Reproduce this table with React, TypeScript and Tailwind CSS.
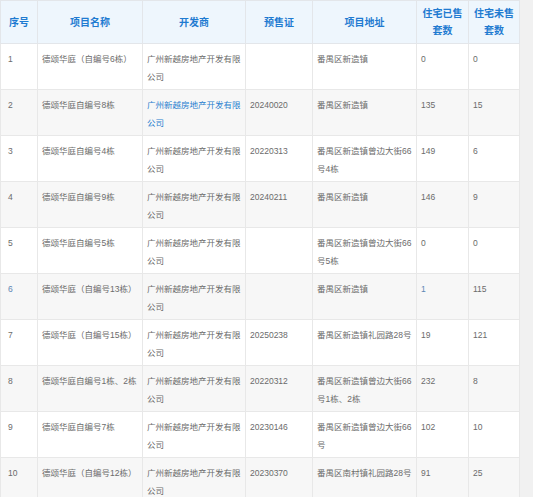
import React from 'react';

interface Row {
  no: number;
  name: string;
  dev: string;
  cert: string;
  addr: string;
  sold: number;
  unsold: number;
  devLink?: boolean;
  hl?: boolean;
}

const DEV = '广州新越房地产开发有限公司';

const rows: Row[] = [
  { no: 1, name: '德颂华庭（自编号6栋）', dev: DEV, cert: '', addr: '番禺区新造镇', sold: 0, unsold: 0 },
  { no: 2, name: '德颂华庭自编号8栋', dev: DEV, cert: '20240020', addr: '番禺区新造镇', sold: 135, unsold: 15, devLink: true },
  { no: 3, name: '德颂华庭自编号4栋', dev: DEV, cert: '20220313', addr: '番禺区新造镇曾边大街66号4栋', sold: 149, unsold: 6 },
  { no: 4, name: '德颂华庭自编号9栋', dev: DEV, cert: '20240211', addr: '番禺区新造镇', sold: 146, unsold: 9 },
  { no: 5, name: '德颂华庭自编号5栋', dev: DEV, cert: '', addr: '番禺区新造镇曾边大街66号5栋', sold: 0, unsold: 0 },
  { no: 6, name: '德颂华庭（自编号13栋）', dev: DEV, cert: '', addr: '番禺区新造镇', sold: 1, unsold: 115, hl: true },
  { no: 7, name: '德颂华庭（自编号15栋）', dev: DEV, cert: '20250238', addr: '番禺区新造镇礼园路28号', sold: 19, unsold: 121 },
  { no: 8, name: '德颂华庭自编号1栋、2栋', dev: DEV, cert: '20220312', addr: '番禺区新造镇曾边大街66号1栋、2栋', sold: 232, unsold: 8 },
  { no: 9, name: '德颂华庭自编号7栋', dev: DEV, cert: '20230146', addr: '番禺区新造镇曾边大街66号', sold: 102, unsold: 10 },
  { no: 10, name: '德颂华庭（自编号12栋）', dev: DEV, cert: '20230370', addr: '番禺区南村镇礼园路28号', sold: 91, unsold: 25 },
];

const th = 'border border-[#e3e6ea] px-1 text-center align-middle font-bold text-[10px] leading-[17px] text-[#1f7bd1]';
const td = 'border border-[#e8e8e8] px-1 pt-[6px] align-top text-[8.5px] leading-[18px]';
const gray = 'text-[#6b6b6b]';
const blue = 'text-[#2a7fcf]';
const muted = 'text-[#5d86b3]';

export default function App() {
  return (
    <div className="flex w-[533px] bg-white" style={{ fontFamily: '"Liberation Sans", "Noto Sans CJK SC", sans-serif' }}>
      <table className="w-[519px] table-fixed border-collapse">
        <colgroup>
          <col className="w-[37px]" />
          <col className="w-[105px]" />
          <col className="w-[103px]" />
          <col className="w-[67px]" />
          <col className="w-[104px]" />
          <col className="w-[52px]" />
          <col className="w-[51px]" />
        </colgroup>
        <thead>
          <tr className="h-[43px] bg-[#eef6fd]">
            <th className={th}>序号</th>
            <th className={th}>项目名称</th>
            <th className={th}>开发商</th>
            <th className={th}>预售证</th>
            <th className={th}>项目地址</th>
            <th className={th}>住宅已售套数</th>
            <th className={th}>住宅未售套数</th>
          </tr>
        </thead>
        <tbody>
          {rows.map(r => (
            <tr key={r.no} className={`h-[46px] ${r.no % 2 === 0 ? 'bg-[#f7f7f7]' : 'bg-white'}`}>
              <td className={`${td} pl-[7px] ${r.hl ? muted : gray}`}>{r.no}</td>
              <td className={`${td} ${gray}`}>{r.name}</td>
              <td className={`${td} ${r.devLink ? blue : gray}`}>{r.dev}</td>
              <td className={`${td} ${gray}`}>{r.cert}</td>
              <td className={`${td} ${gray}`}>{r.addr}</td>
              <td className={`${td} ${r.hl ? muted : gray}`}>{r.sold}</td>
              <td className={`${td} ${gray}`}>{r.unsold}</td>
            </tr>
          ))}
        </tbody>
      </table>
      <div className="w-[14px] shrink-0 bg-[#f1f1f1]" />
    </div>
  );
}
